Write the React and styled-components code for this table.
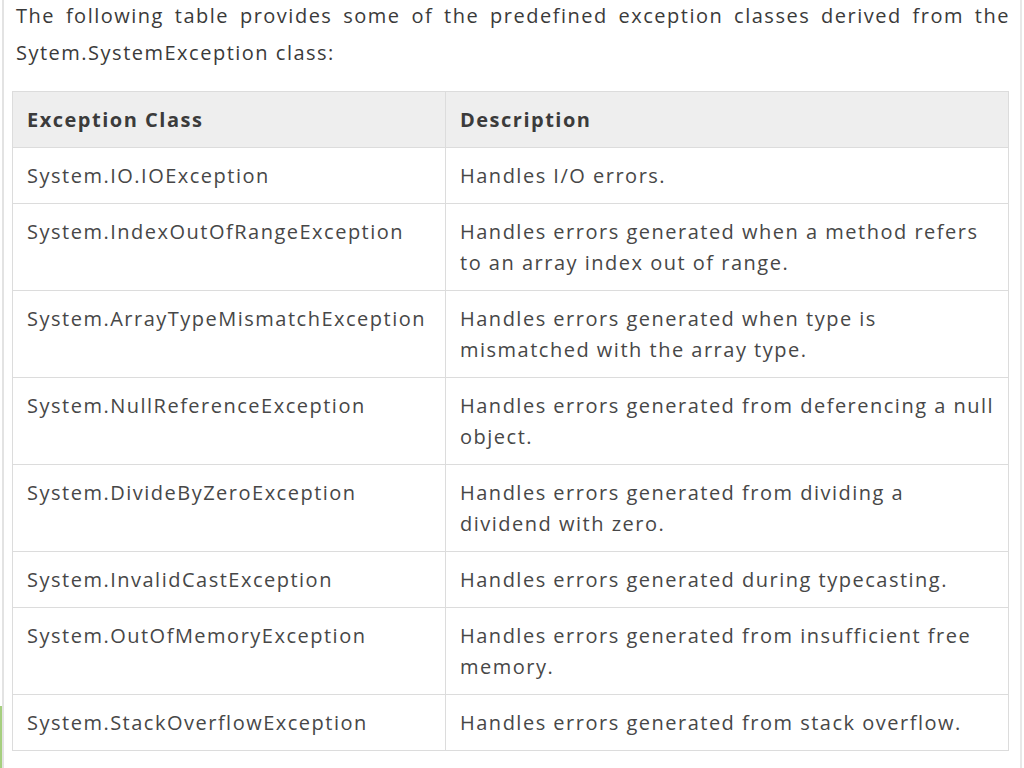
import React from 'react';
import styled, { createGlobalStyle } from 'styled-components';

const GlobalStyle = createGlobalStyle`
  html, body {
    margin: 0;
    padding: 0;
    background: #ffffff;
  }
  body {
    font-family: "Open Sans", "Liberation Sans", sans-serif;
    color: #444;
    overflow: hidden;
  }
`;

const Shell = styled.div`
  display: flex;
  width: 1024px;
  height: 768px;
  overflow: hidden;
`;

const Rail = styled.div`
  display: flex;
  flex-direction: column;
  width: 2px;
  flex-shrink: 0;
`;

const RailFill = styled.div`
  flex: 1;
`;

const RailAccent = styled.div`
  height: 62px;
  background: #a6cf7f;
`;

const Content = styled.main`
  width: 1020px;
  border-left: 2px solid #e3e3e3;
  border-right: 2px solid #e8e8e8;
  padding: 0 6px 0 8px;
  box-sizing: border-box;
  letter-spacing: 1.5px;
`;

const Intro = styled.p`
  margin: -3px 0 0 0;
  padding: 0 4px 0 4px;
  font-size: 20px;
  line-height: 37px;
  text-align: justify;
  color: #3a3a3a;
`;

const Table = styled.table`
  width: 997px;
  margin-top: 20px;
  border-collapse: collapse;
  border: 1px solid #dcdcdc;
  font-size: 20px;
`;

const HeadCell = styled.th`
  text-align: left;
  font-weight: 700;
  color: #3b3b3b;
  background: #eeeeee;
  padding: 12px 10px 12px 14px;
  line-height: 31px;
  border: 1px solid #dcdcdc;
  width: ${(p) => p.$w || 'auto'};
`;

const Cell = styled.td`
  vertical-align: top;
  color: #474747;
  padding: 12px 10px 12px 14px;
  line-height: 31px;
  border: 1px solid #dcdcdc;
`;

const rows = [
  ['System.IO.IOException', 'Handles I/O errors.'],
  ['System.IndexOutOfRangeException', 'Handles errors generated when a method refers to an array index out of range.'],
  ['System.ArrayTypeMismatchException', 'Handles errors generated when type is mismatched with the array type.'],
  ['System.NullReferenceException', 'Handles errors generated from deferencing a null object.'],
  ['System.DivideByZeroException', 'Handles errors generated from dividing a dividend with zero.'],
  ['System.InvalidCastException', 'Handles errors generated during typecasting.'],
  ['System.OutOfMemoryException', 'Handles errors generated from insufficient free memory.'],
  ['System.StackOverflowException', 'Handles errors generated from stack overflow.'],
];

const App = () => (
  <>
    <GlobalStyle />
    <Shell>
      <Rail>
        <RailFill />
        <RailAccent />
      </Rail>
      <Content>
        <Intro>
          The following table provides some of the predefined exception classes derived from the
          Sytem.SystemException class:
        </Intro>
        <Table>
          <thead>
            <tr>
              <HeadCell $w="408px">Exception Class</HeadCell>
              <HeadCell>Description</HeadCell>
            </tr>
          </thead>
          <tbody>
            {rows.map(([name, desc]) => (
              <tr key={name}>
                <Cell>{name}</Cell>
                <Cell>{desc}</Cell>
              </tr>
            ))}
          </tbody>
        </Table>
      </Content>
    </Shell>
  </>
);

export default App;
